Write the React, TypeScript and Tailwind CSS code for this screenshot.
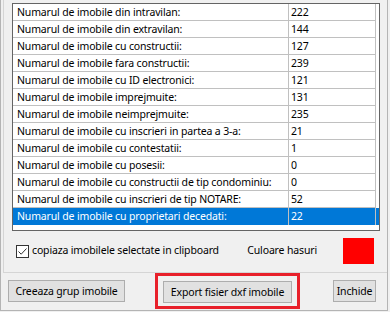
import React from 'react';

const rows: [string, string][] = [
  ['Numarul de imobile din intravilan:', '222'],
  ['Numarul de imobile din extravilan:', '144'],
  ['Numarul de imobile cu constructii:', '127'],
  ['Numarul de imobile fara constructii:', '239'],
  ['Numarul de imobile cu ID electronici:', '121'],
  ['Numarul de imobile imprejmuite:', '131'],
  ['Numarul de imobile neimprejmuite:', '235'],
  ['Numarul de imobile cu inscrieri in partea a 3-a:', '21'],
  ['Numarul de imobile cu contestatii:', '1'],
  ['Numarul de imobile cu posesii:', '0'],
  ['Numarul de imobile cu constructii de tip condominiu:', '0'],
  ['Numarul de imobile cu inscrieri de tip NOTARE:', '52'],
  ['Numarul de imobile cu proprietari decedati:', '22'],
];

export default function App() {
  return (
    <div
      className="w-[390px] h-[312px] bg-[#f0f0f0] text-[10.5px] tracking-[-0.15px] text-black overflow-hidden whitespace-nowrap"
      style={{ fontFamily: '"Segoe UI", "Noto Sans", Arial, sans-serif' }}
    >
      <div className="w-[388px] h-[311px] border-l border-r border-b border-[#b4b4b4] flex flex-col">
        {/* group box */}
        <div className="ml-[2px] h-[273px] border-l border-b border-[#d5d5d5] pt-[3px] pl-[8px] flex flex-col">
          <div className="w-[368px] h-[228px] border border-[#646464] bg-white flex flex-col">
            {rows.map(([label, value], i) => {
              const sel = i === rows.length - 1;
              return (
                <div
                  key={label}
                  className={`flex h-[17px] leading-[16px] ${sel ? 'bg-[#0078d7] text-white' : ''}`}
                >
                  <div className={`w-[276px] pl-[4px] border-r border-[#c0c0c0] ${sel ? '' : 'border-b'}`}>
                    {label}
                  </div>
                  <div className={`w-[87px] pl-[2px] border-r border-[#c0c0c0] ${sel ? '' : 'border-b'}`}>
                    {value}
                  </div>
                </div>
              );
            })}
          </div>
          <div className="flex items-center h-[34px] mt-[3px]">
            <div className="ml-[4px] w-[13px] h-[13px] border border-[#333] bg-white flex items-center justify-center">
              <svg width="11" height="11" viewBox="0 0 11 11">
                <path d="M1.5 5.5 L4.2 8.2 L9.5 2.5" fill="none" stroke="#333" strokeWidth="1" />
              </svg>
            </div>
            <span className="ml-[3px]">copiaza imobilele selectate in clipboard</span>
            <span className="ml-auto mr-[26px]">Culoare hasuri</span>
            <div className="w-[31px] h-[26px] bg-[#ff0000] mr-[13px]"></div>
          </div>
        </div>
        {/* buttons */}
        <div className="flex items-center h-[36px]">
          <button className="ml-[7px] w-[117px] h-[22px] bg-[#e1e1e1] border border-[#adadad] leading-[20px]">
            Creeaza grup imobile
          </button>
          <div className="ml-[30px] border-[3px] border-[#e8202a] px-[5px] pt-[5px] pb-[3px]">
            <button className="w-[129px] h-[22px] bg-[#e1e1e1] border border-[#adadad] leading-[20px]">
              Export fisier dxf imobile
            </button>
          </div>
          <button className="ml-[33px] w-[43px] h-[22px] bg-[#e1e1e1] border border-[#adadad] leading-[20px]">
            Inchide
          </button>
        </div>
      </div>
    </div>
  );
}
